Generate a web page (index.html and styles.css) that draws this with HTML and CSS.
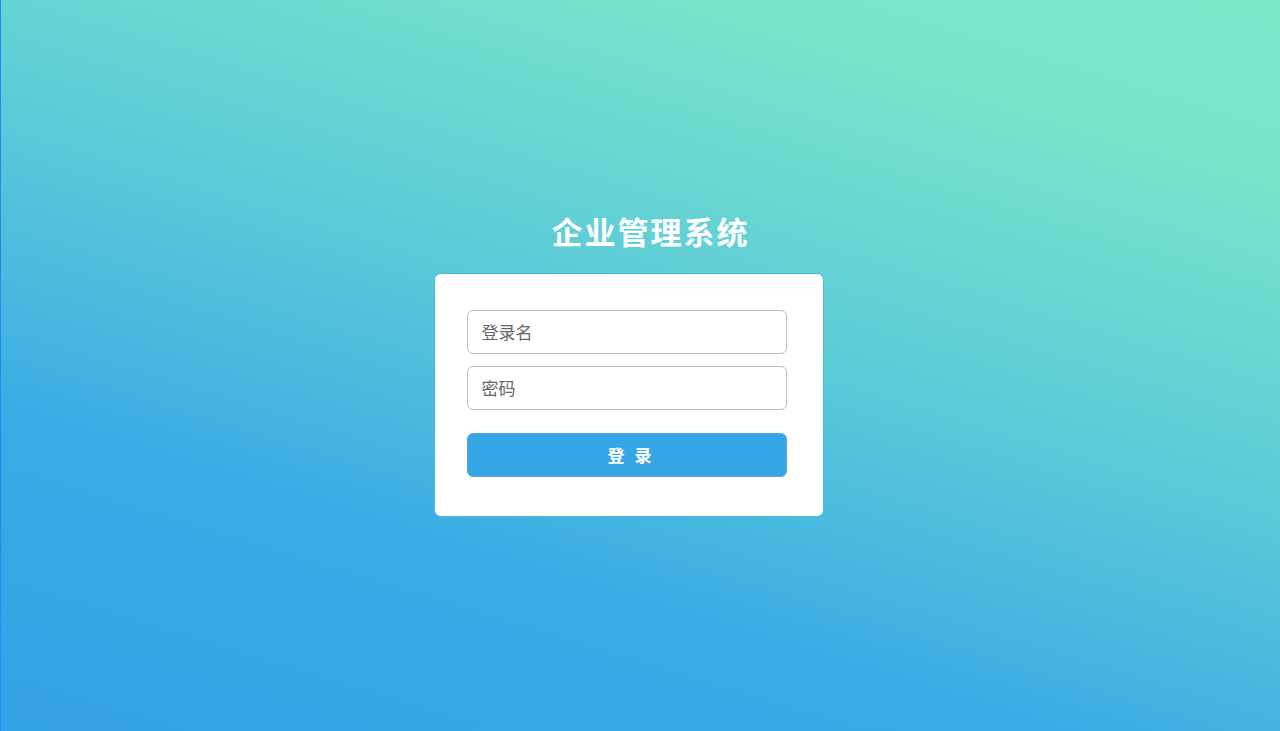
FILE: index.html
```html
<!DOCTYPE html>
<html lang="zh-CN">
<head>
<meta charset="utf-8">
<title>企业管理系统</title>
<link rel="stylesheet" href="styles.css">
</head>
<body>
<div class="page">
  <div class="login">
    <h1 class="title">企业管理系统</h1>
    <form class="card">
      <input class="field" type="text" placeholder="登录名">
      <input class="field" type="password" placeholder="密码">
      <button class="btn" type="button">登 录</button>
    </form>
  </div>
</div>
</body>
</html>
```

FILE: styles.css
```css
html, body {
  margin: 0;
  padding: 0;
  height: 100%;
}
body {
  font-family: "Noto Sans CJK SC", "Noto Sans", sans-serif;
  background: linear-gradient(17deg, #34a2e6 0%, #3aabe4 28%, #5bcad8 55%, #79e5ca 85%, #7ae7c9 100%);
  border-left: 1px solid #168ff0;
  box-sizing: border-box;
  overflow: hidden;
}
.page {
  height: 100%;
  display: flex;
  align-items: center;
  justify-content: center;
}
.login {
  display: flex;
  flex-direction: column;
  align-items: center;
  margin-top: -3px;
}
.title {
  margin: 0 0 23px 20px;
  color: #fff;
  font-size: 31px;
  font-weight: 700;
  letter-spacing: 2px;
  line-height: 38px;
}
.card {
  width: 390px;
  box-sizing: border-box;
  margin: 0 24px 0 0;
  padding: 36px 36px 39px 32px;
  background: #fff;
  border: 1px solid #48bdd8;
  border-radius: 7px;
  display: flex;
  flex-direction: column;
}
.field {
  height: 44px;
  box-sizing: border-box;
  border: 1px solid #b8c2cc;
  border-radius: 6px;
  padding: 0 14px;
  font-family: inherit;
  font-size: 17px;
  color: #333;
  outline: none;
  margin-bottom: 12px;
}
.field::placeholder {
  color: #666;
}
.btn {
  margin-top: 11px;
  height: 44px;
  border: 1px solid #5aa9e0;
  border-radius: 6px;
  background: #36a6e7;
  color: #fff;
  font-family: inherit;
  font-size: 17px;
  font-weight: 700;
  letter-spacing: 3px;
  padding: 0 0 0 9px;
  cursor: pointer;
}
```
